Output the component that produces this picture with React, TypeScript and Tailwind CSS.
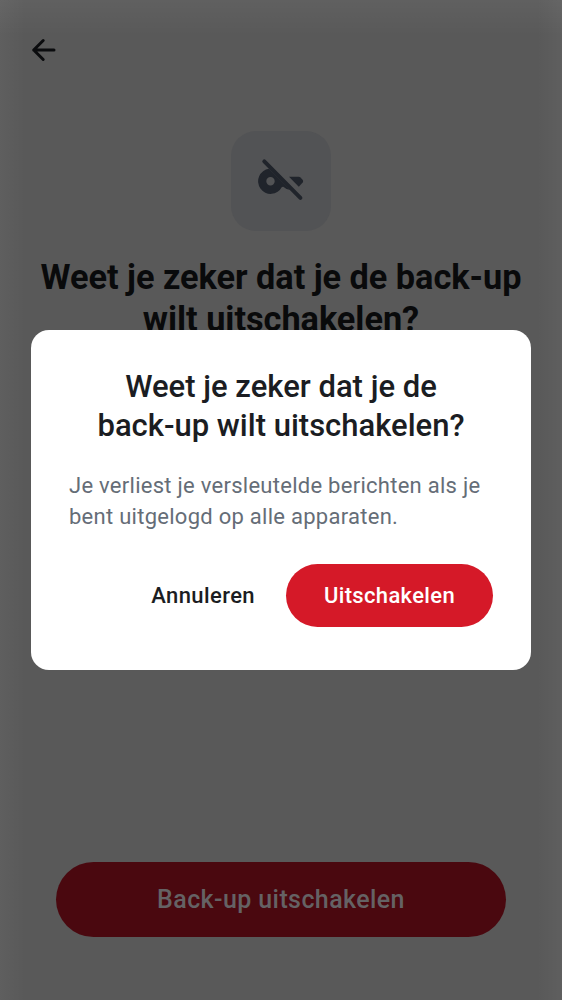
export default function App() {
  return (
    <div className="relative flex h-[1000px] w-full flex-col items-center overflow-hidden bg-[#595959] bg-[linear-gradient(to_bottom,#ffffff0b,#ffffff00_36px),linear-gradient(to_right,#ffffff09,#ffffff00_25px,#ffffff00_calc(100%-25px),#ffffff09)] font-['Roboto',sans-serif]">
      <header className="flex h-[100px] w-full items-center px-[25px]">
        <button aria-label="Terug" className="flex h-9 w-9 items-center justify-center">
          <svg width="36" height="36" viewBox="0 0 36 36" fill="none" stroke="#0b0c0e" strokeWidth="3" strokeLinecap="round" strokeLinejoin="round">
            <path d="M18.2 8.5 8.7 18l9.5 9.5M8.7 18h20.3" />
          </svg>
        </button>
      </header>
      <div className="mt-[31px] flex h-[100px] w-[100px] items-center justify-center rounded-[25px] bg-[#525355]">
        <svg width="50" height="50" viewBox="0 0 50 50" fill="#20242b">
          <path fillRule="evenodd" d="M13 12.8 34 33.8 32.6 33.4 30.5 33 27.3 30.8 25.9 31.1A12.6 12.6 0 1 1 13 12.8ZM14.5 21.1a4.2 4.2 0 1 0 0 8.4 4.2 4.2 0 0 0 0-8.4Z" />
          <path d="M33 20.8h9.7c.8 0 1.3.2 1.8.7l2.1 2.3c.7.8.7 1.8.1 2.7L42.8 30.8Z" />
          <path d="M8.3 5.3 44.4 41.8" stroke="#20242b" strokeWidth="4" strokeLinecap="round" />
        </svg>
      </div>
      <h1 className="mt-[25px] text-center text-[34.3px] leading-[42px] font-bold tracking-[-0.03px] text-[#090a0b]">
        Weet je zeker dat je de back-up<br />wilt uitschakelen?
      </h1>
      <button className="mt-auto mb-[63px] h-[75px] w-[450px] rounded-full bg-[#4a080f] pt-px text-[25px] font-medium tracking-[0.4px] text-[#656264]">
        Back-up uitschakelen
      </button>
      <section role="dialog" className="absolute top-[330px] left-[31px] h-[340px] w-[500px] rounded-[18px] bg-white px-[38px] pt-[37px]">
        <h2 className="text-center text-[31px] leading-[39px] font-medium text-[#1b1d22]">
          Weet je zeker dat je de<br />back-up wilt uitschakelen?
        </h2>
        <p className="mt-[25px] text-[22px] leading-[31px] tracking-[0.27px] whitespace-nowrap text-[#656d77]">
          Je verliest je versleutelde berichten als je<br />bent uitgelogd op alle apparaten.
        </p>
        <div className="mt-[32px] flex items-center justify-end gap-[31px]">
          <button className="text-[22px] font-medium tracking-[0.4px] text-[#1b1d22]">Annuleren</button>
          <button className="h-[63px] w-[207px] rounded-full bg-[#d51928] text-[22px] font-medium tracking-[0.35px] text-white">Uitschakelen</button>
        </div>
      </section>
    </div>
  );
}
